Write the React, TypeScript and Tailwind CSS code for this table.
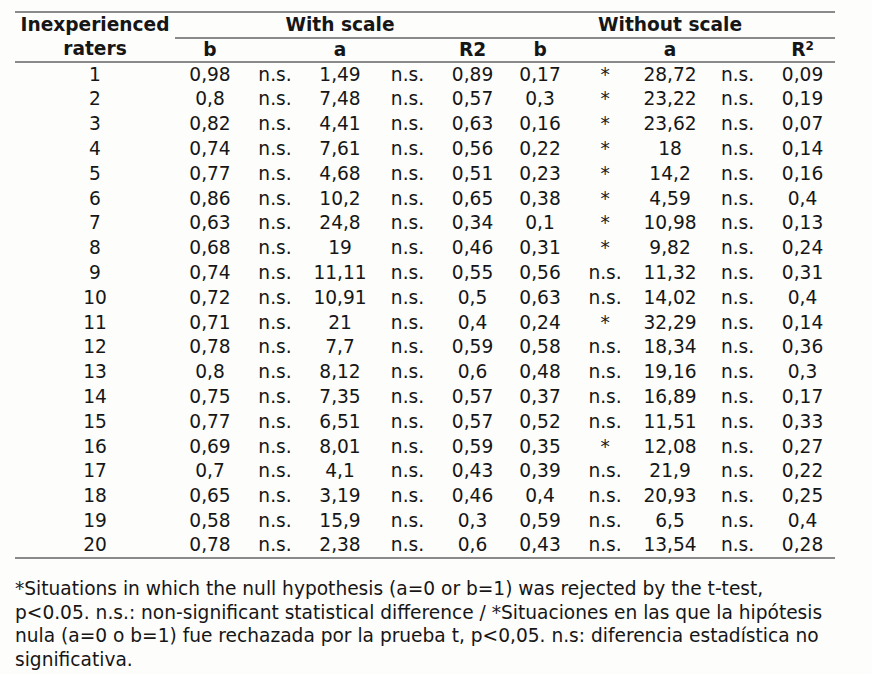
import React from 'react';

// rater, b, sig b, a, sig a, R2 | b, sig b, a, sig a, R2
const rows: string[][] = [
  ['1', '0,98', 'n.s.', '1,49', 'n.s.', '0,89', '0,17', '*', '28,72', 'n.s.', '0,09'],
  ['2', '0,8', 'n.s.', '7,48', 'n.s.', '0,57', '0,3', '*', '23,22', 'n.s.', '0,19'],
  ['3', '0,82', 'n.s.', '4,41', 'n.s.', '0,63', '0,16', '*', '23,62', 'n.s.', '0,07'],
  ['4', '0,74', 'n.s.', '7,61', 'n.s.', '0,56', '0,22', '*', '18', 'n.s.', '0,14'],
  ['5', '0,77', 'n.s.', '4,68', 'n.s.', '0,51', '0,23', '*', '14,2', 'n.s.', '0,16'],
  ['6', '0,86', 'n.s.', '10,2', 'n.s.', '0,65', '0,38', '*', '4,59', 'n.s.', '0,4'],
  ['7', '0,63', 'n.s.', '24,8', 'n.s.', '0,34', '0,1', '*', '10,98', 'n.s.', '0,13'],
  ['8', '0,68', 'n.s.', '19', 'n.s.', '0,46', '0,31', '*', '9,82', 'n.s.', '0,24'],
  ['9', '0,74', 'n.s.', '11,11', 'n.s.', '0,55', '0,56', 'n.s.', '11,32', 'n.s.', '0,31'],
  ['10', '0,72', 'n.s.', '10,91', 'n.s.', '0,5', '0,63', 'n.s.', '14,02', 'n.s.', '0,4'],
  ['11', '0,71', 'n.s.', '21', 'n.s.', '0,4', '0,24', '*', '32,29', 'n.s.', '0,14'],
  ['12', '0,78', 'n.s.', '7,7', 'n.s.', '0,59', '0,58', 'n.s.', '18,34', 'n.s.', '0,36'],
  ['13', '0,8', 'n.s.', '8,12', 'n.s.', '0,6', '0,48', 'n.s.', '19,16', 'n.s.', '0,3'],
  ['14', '0,75', 'n.s.', '7,35', 'n.s.', '0,57', '0,37', 'n.s.', '16,89', 'n.s.', '0,17'],
  ['15', '0,77', 'n.s.', '6,51', 'n.s.', '0,57', '0,52', 'n.s.', '11,51', 'n.s.', '0,33'],
  ['16', '0,69', 'n.s.', '8,01', 'n.s.', '0,59', '0,35', '*', '12,08', 'n.s.', '0,27'],
  ['17', '0,7', 'n.s.', '4,1', 'n.s.', '0,43', '0,39', 'n.s.', '21,9', 'n.s.', '0,22'],
  ['18', '0,65', 'n.s.', '3,19', 'n.s.', '0,46', '0,4', 'n.s.', '20,93', 'n.s.', '0,25'],
  ['19', '0,58', 'n.s.', '15,9', 'n.s.', '0,3', '0,59', 'n.s.', '6,5', 'n.s.', '0,4'],
  ['20', '0,78', 'n.s.', '2,38', 'n.s.', '0,6', '0,43', 'n.s.', '13,54', 'n.s.', '0,28'],
];

const widths = [160, 70, 60, 70, 65, 65, 70, 60, 70, 65, 65];

export default function App() {
  return (
    <div className="min-h-[674px] bg-[#fdfdfc] pl-[15px] pt-[11px] text-[18.6px] text-[#161616] [font-family:'DejaVu_Sans',Verdana,sans-serif]">
      <table className="w-[820px] table-fixed border-collapse">
        <colgroup>
          {widths.map((w, i) => (
            <col key={i} style={{ width: w }} />
          ))}
        </colgroup>
        <thead>
          <tr className="h-[25px] border-t-2 border-[#8a8a8a]">
            <th rowSpan={2} className="border-b-2 border-[#8a8a8a] p-0 text-center font-bold leading-[24px]">
              Inexperienced
              <br />
              raters
            </th>
            <th colSpan={5} className="border-b-2 border-[#8a8a8a] p-0 pt-px text-center font-bold leading-[22px]">
              With scale
            </th>
            <th colSpan={5} className="border-b-2 border-[#8a8a8a] p-0 pt-px text-center font-bold leading-[22px]">
              Without scale
            </th>
          </tr>
          <tr className="h-[24px] border-b-2 border-[#8a8a8a] font-bold">
            <th className="p-0 text-center leading-[22px]">b</th>
            <th className="p-0"></th>
            <th className="p-0 text-center leading-[22px]">a</th>
            <th className="p-0"></th>
            <th className="p-0 text-center leading-[22px]">R2</th>
            <th className="p-0 text-center leading-[22px]">b</th>
            <th className="p-0"></th>
            <th className="p-0 text-center leading-[22px]">a</th>
            <th className="p-0"></th>
            <th className="p-0 text-center leading-[22px]">
              R<sup className="text-[12px]">2</sup>
            </th>
          </tr>
        </thead>
        <tbody>
          {rows.map((r, i) => (
            <tr key={i} className={`h-[24.8px] ${i === rows.length - 1 ? 'border-b-2 border-[#8a8a8a]' : ''}`}>
              {r.map((c, j) => (
                <td key={j} className="p-0 text-center leading-[24px]">
                  {c}
                </td>
              ))}
            </tr>
          ))}
        </tbody>
      </table>

      <p className="mt-[18px] whitespace-nowrap leading-[23.5px]">
        *Situations in which the null hypothesis (a=0 or b=1) was rejected by the t-test,
        <br />
        p&lt;0.05. n.s.: non-significant statistical difference / *Situaciones en las que la hipótesis
        <br />
        nula (a=0 o b=1) fue rechazada por la prueba t, p&lt;0,05. n.s: diferencia estadística no
        <br />
        significativa.
      </p>
    </div>
  );
}
